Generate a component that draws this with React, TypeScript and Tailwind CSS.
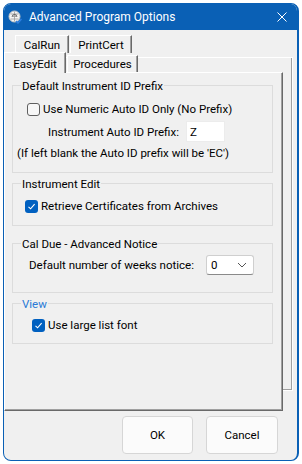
import React from 'react'

const font = { fontFamily: 'Roboto, "Noto Sans", sans-serif' }

function Check({ checked }: { checked: boolean }) {
  if (!checked) {
    return <div className="w-[13px] h-[13px] rounded-[3px] border border-[#5f5f5f] bg-[#f7f7f7] shrink-0" />
  }
  return (
    <div className="w-[13px] h-[13px] rounded-[3px] bg-[#0060c0] shrink-0 flex items-center justify-center">
      <svg width="9" height="9" viewBox="0 0 9 9">
        <polyline points="1.5,4.8 3.6,6.8 7.6,2.2" fill="none" stroke="white" strokeWidth="1.1" />
      </svg>
    </div>
  )
}

function Group({ title, blue, h, className, children }: { title: string; blue?: boolean; h: string; className?: string; children: React.ReactNode }) {
  return (
    <div className={`ml-[7px] w-[261px] border border-[#dcdcdc] flex flex-col ${h} ${className ?? ''}`}>
      <div className={`-mt-[8px] ml-[8px] px-[1px] w-fit bg-[#f0f0f0] leading-[16px] ${blue ? 'text-[#2a7ad6]' : 'text-black'}`}>
        {title}
      </div>
      {children}
    </div>
  )
}

function BackTab({ label, w }: { label: string; w: string }) {
  return (
    <div className={`h-[18px] ${w} border-l border-t border-white border-r border-r-[#696969] shadow-[inset_-1px_0_0_#a0a0a0] flex items-center justify-center leading-[16px]`}>
      {label}
    </div>
  )
}

export default function App() {
  return (
    <div className="w-[302px] h-[464px] bg-white pt-[3px] pl-[3px] text-[11.5px] text-black whitespace-nowrap" style={font}>
      <div className="w-[296px] h-[458px] rounded-[8px] overflow-hidden border border-r-2 border-[#0a60b5] bg-[#f0f0f0] flex flex-col">
        {/* title bar */}
        <div className="h-[26px] bg-[#0a60b5] flex items-center shrink-0">
          <svg width="14" height="14" viewBox="0 0 14 14" className="ml-[4px]">
            <circle cx="6.5" cy="6.5" r="5.5" fill="#f4f4f4" stroke="#c8c8c8" />
            <path d="M3.5 6.5h6M6.5 1.5v10M2.5 4h8M2.5 9h8" stroke="#9a9a9a" strokeWidth="0.8" fill="none" />
            <path d="M4.5 6.5a2 2 0 1 1 4 0" stroke="#6a6a6a" strokeWidth="1.2" fill="none" />
            <polyline points="8,11 10,13 13.5,9" stroke="#2f7fe0" strokeWidth="1.5" fill="none" />
          </svg>
          <span className="ml-[7px] text-white leading-[16px] text-[12px]">Advanced Program Options</span>
          <svg width="10" height="10" viewBox="0 0 10 10" className="ml-auto mr-[10px]">
            <path d="M0.5 0.5l9 9M9.5 0.5l-9 9" stroke="white" strokeWidth="1" />
          </svg>
        </div>

        {/* tab control */}
        <div className="grid">
          <div className="col-start-1 row-start-1 flex flex-col">
            <div className="mt-[5px] pl-[11px] flex gap-[1px]">
              <BackTab label="CalRun" w="w-[54px]" />
              <BackTab label="PrintCert" w="w-[62px]" />
            </div>
            <div className="mt-[4px] ml-[6px] mr-[4px] h-[334px] border-t border-white border-r border-b border-[#696969] shadow-[inset_-1px_-1px_0_#a0a0a0]" />
          </div>

          <div className="col-start-1 row-start-1 flex flex-col">
            <div className="mt-[22px] h-[20px] flex items-end">
              <div className="relative z-10 -mb-[1px] h-[21px] w-[62px] bg-[#f0f0f0] border-l border-t border-white border-r border-r-[#696969] shadow-[inset_-1px_0_0_#a0a0a0] flex items-start justify-center pt-[3px] leading-[16px]">
                EasyEdit
              </div>
              <div className="ml-[1px] h-[17px] w-[71px] bg-[#f0f0f0] border-l border-t border-white border-r border-r-[#696969] shadow-[inset_-1px_0_0_#a0a0a0] flex items-center justify-center leading-[16px]">
                Procedures
              </div>
            </div>
            <div className="mr-[14px] h-[339px] bg-[#f0f0f0] border-l border-t border-white border-r border-b border-r-[#696969] border-b-[#696969] shadow-[inset_-1px_-1px_0_#a0a0a0] flex flex-col">
              <Group title="Default Instrument ID Prefix" h="h-[88px]" className="mt-[12px]">
                <div className="mt-[7px] ml-[14px] flex items-center gap-[3px] leading-[16px]">
                  <Check checked={false} />
                  <span>Use Numeric Auto ID Only (No Prefix)</span>
                </div>
                <div className="mt-[4px] ml-[35px] flex items-center leading-[16px]">
                  <span className="w-[138px]">Instrument Auto ID Prefix:</span>
                  <div className="w-[39px] h-[21px] bg-white border border-[#ececec] pl-[3px] flex items-center">Z</div>
                </div>
                <div className="mt-[3px] ml-[4px] leading-[16px]">(If left blank the Auto ID prefix will be 'EC')</div>
              </Group>

              <Group title="Instrument Edit" h="h-[43px]" className="mt-[10px]">
                <div className="mt-[6px] ml-[12px] flex items-center gap-[3px] leading-[16px]">
                  <Check checked />
                  <span>Retrieve Certificates from Archives</span>
                </div>
              </Group>

              <Group title="Cal Due - Advanced Notice" h="h-[50px]" className="mt-[17px]">
                <div className="mt-[3px] ml-[16px] flex items-center leading-[16px]">
                  <span className="w-[177px]">Default number of weeks notice:</span>
                  <div className="w-[48px] h-[20px] bg-white border border-[#cfcfcf] border-b-[#8a8a8a] rounded-[3px] flex items-center pl-[4px] pr-[6px]">
                    <span>0</span>
                    <svg width="10" height="6" viewBox="0 0 10 6" className="ml-auto">
                      <polyline points="1,1 5,5 9,1" fill="none" stroke="#555" strokeWidth="1" />
                    </svg>
                  </div>
                </div>
              </Group>

              <Group title="View" blue h="h-[41px]" className="mt-[10px]">
                <div className="mt-[5px] ml-[19px] flex items-center gap-[3px] leading-[16px]">
                  <Check checked />
                  <span>Use large list font</span>
                </div>
              </Group>
            </div>
          </div>
        </div>

        {/* buttons */}
        <div className="mt-[5px] pr-[19px] flex justify-end gap-[13px]">
          <button className="w-[71px] h-[38px] rounded-[4px] border border-[#d6d6d6] bg-[#fbfbfb] leading-[16px]">OK</button>
          <button className="w-[72px] h-[38px] rounded-[4px] border border-[#d6d6d6] bg-[#fbfbfb] leading-[16px]">Cancel</button>
        </div>
      </div>
    </div>
  )
}
